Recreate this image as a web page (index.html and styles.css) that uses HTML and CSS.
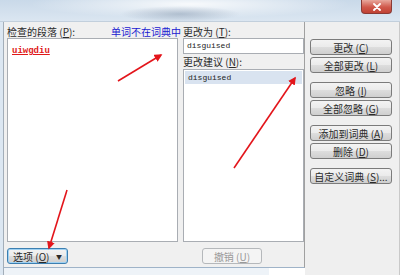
FILE: index.html
```html
<!DOCTYPE html>
<html lang="zh-CN">
<head>
  <meta charset="UTF-8" />
  <title>拼写检查</title>
  <link rel="stylesheet" href="styles.css">
</head>
<body>
  <div class="titlebar">
    <div class="title-blur"></div>
    <button class="close-btn" aria-label="关闭">
      <svg viewBox="0 0 10 8" xmlns="http://www.w3.org/2000/svg">
        <path d="M2 1l6 6M8 1L2 7" stroke="#fff" stroke-width="1.8" stroke-linecap="round"/>
      </svg>
    </button>
  </div>

  <div class="window">
    <div class="frame-left"></div>

    <div class="left">
      <div class="pane">
        <div class="cols">
          <div class="col col-main">
            <div class="label-row">
              <span>检查的段落 (<u>P</u>):</span>
              <span class="not-found">单词不在词典中</span>
            </div>
            <div class="box paragraph">
              <span class="bad-word">uiwgdiu</span>
            </div>
          </div>

          <div class="col col-side">
            <div class="label-row">
              <span>更改为 (<u>T</u>):</span>
            </div>
            <div class="box field">disguised</div>
            <div class="label-row">
              <span>更改建议 (<u>N</u>):</span>
            </div>
            <div class="box list">
              <div class="list-item selected">disguised</div>
            </div>
          </div>
        </div>

        <div class="bottom-row">
          <button class="btn btn-options">
            <span>选项 (<u>O</u>)</span>
            <span class="caret">▼</span>
          </button>
          <button class="btn btn-undo" disabled>撤销 (<u>U</u>)</button>
        </div>
      </div>
      <div class="strip"></div>
    </div>

    <div class="side">
      <button class="btn">更改 (<u>C</u>)</button>
      <button class="btn">全部更改 (<u>L</u>)</button>
      <button class="btn group">忽略 (<u>I</u>)</button>
      <button class="btn">全部忽略 (<u>G</u>)</button>
      <button class="btn group">添加到词典 (<u>A</u>)</button>
      <button class="btn">删除 (<u>D</u>)</button>
      <button class="btn group">自定义词典 (<u>S</u>)...</button>
    </div>
  </div>

  <!-- red annotation arrows drawn over the dialog -->
  <svg class="arrows" viewBox="0 0 400 275" xmlns="http://www.w3.org/2000/svg">
    <defs>
      <marker id="head" viewBox="0 0 10 10" refX="8" refY="5" markerWidth="5" markerHeight="5" orient="auto">
        <path d="M0 0L10 5L0 10z" fill="#e3151b"/>
      </marker>
    </defs>
    <line x1="118" y1="81" x2="161" y2="55" stroke="#e3151b" stroke-width="1.6" marker-end="url(#head)"/>
    <line x1="234" y1="168" x2="295" y2="78" stroke="#e3151b" stroke-width="1.6" marker-end="url(#head)"/>
    <line x1="67" y1="190" x2="49" y2="248" stroke="#e3151b" stroke-width="1.6" marker-end="url(#head)"/>
  </svg>
</body>
</html>
```

FILE: styles.css
```css
html, body {
  margin: 0;
  padding: 0;
}

body {
  width: 400px;
  height: 275px;
  overflow: hidden;
  position: relative;
  background: #f0f0f0;
  font-family: "Noto Sans CJK SC", "Liberation Sans", sans-serif;
  font-size: 10px;
  color: #2a2a2a;
}

u { text-decoration: underline; }

/* blurred Aero title bar */
.titlebar {
  height: 21px;
  display: flex;
  justify-content: flex-end;
  align-items: flex-start;
  position: relative;
  background:
    radial-gradient(ellipse 60px 8px at 180px 14px, rgba(120,140,165,0.45), rgba(120,140,165,0) 100%),
    radial-gradient(ellipse 160px 14px at 190px 4px, rgba(255,255,255,0.85), rgba(255,255,255,0) 100%),
    linear-gradient(to bottom, #c9d9e9, #dbe6f1);
}

.close-btn {
  width: 31px;
  height: 14px;
  margin-right: 8px;
  padding: 0;
  border: 1px solid #8a3a34;
  border-top: none;
  border-radius: 0 0 4px 4px;
  background: linear-gradient(to bottom, #e8a89c, #d0584a 55%, #c04234);
  display: flex;
  align-items: center;
  justify-content: center;
}
.close-btn svg { width: 10px; height: 8px; }

.window {
  display: flex;
  height: 254px;
  border-top: 1px solid #c2cfdc;
}

.frame-left {
  width: 3px;
  background: #dce7f2;
  border-right: 1px solid #a3aeb9;
}

.left {
  width: 301px;
  display: flex;
  flex-direction: column;
}

.pane {
  height: 246px;
  box-sizing: border-box;
  padding: 4px 0 0 3px;
  border-right: 1px solid #a0a0a0;
  border-bottom: 1px solid #9fb3c8;
  display: flex;
  flex-direction: column;
}

.strip {
  flex: 1;
  background: linear-gradient(to right, #eef3f8 88%, #fff 88%);
}

.cols {
  display: grid;
  grid-template-columns: 171px 121px;
  column-gap: 5px;
  height: 216px;
}

.col {
  display: flex;
  flex-direction: column;
}

.label-row {
  height: 12px;
  line-height: 12px;
  display: flex;
  justify-content: space-between;
  white-space: nowrap;
  color: #2a2a2a;
}

.not-found {
  color: #1a1ad0;
  margin-right: -3px;
}

.box {
  box-sizing: border-box;
  background: #fff;
  border: 1px solid #a9adb3;
  font-family: "Liberation Mono", monospace;
}

.paragraph {
  flex: 1;
  padding: 6px 4px;
}

.bad-word {
  color: #e01818;
  font-size: 9px;
  font-weight: bold;
  text-decoration: underline;
}

.field {
  height: 16px;
  padding: 0 3px;
  font-size: 8px;
  line-height: 14px;
  color: #222;
  margin-bottom: 2px;
}

.list {
  flex: 1;
  padding: 1px;
  margin-top: 1px;
}

.list-item {
  height: 13px;
  padding: 0 3px;
  font-size: 8px;
  line-height: 13px;
  color: #222;
}
.list-item.selected { background: #d9e3f0; }

.bottom-row {
  display: flex;
  align-items: center;
  padding: 6px 42px 0 0;
}

.btn {
  height: 16px;
  box-sizing: border-box;
  padding: 0;
  border: 1px solid #7b7b7b;
  border-radius: 3px;
  background: linear-gradient(to bottom, #f3f3f3, #ebebeb 48%, #dddddd 52%, #cfcfcf);
  font-family: "Noto Sans CJK SC", "Liberation Sans", sans-serif;
  font-size: 10px;
  line-height: 13px;
  color: #2a2a2a;
  white-space: nowrap;
}

.btn-options {
  width: 61px;
  display: flex;
  align-items: center;
  justify-content: space-between;
  padding: 0 5px 0 5px;
  border-color: #3c7fb1;
  box-shadow: inset 0 0 0 1px #9fd1f2;
}
.caret { font-size: 6px; }

.btn-undo {
  width: 60px;
  margin-left: auto;
  color: #9a9a9a;
  border-color: #b5b8bb;
  background: #f4f4f4;
}

/* right command column */
.side {
  flex: 1;
  background: #efefef;
  border-right: 1px solid #c9c9c9;
  padding: 17px 0 0 5px;
  display: flex;
  flex-direction: column;
  align-items: flex-start;
  gap: 2px;
}
.side .btn { width: 82px; }
.side .btn.group { margin-top: 7px; }

.arrows {
  position: absolute;
  left: 0;
  top: 0;
  width: 400px;
  height: 275px;
  pointer-events: none;
}
```
